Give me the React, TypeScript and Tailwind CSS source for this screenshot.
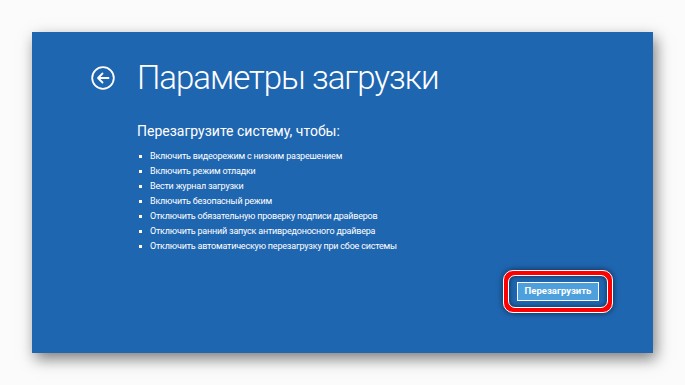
import React from "react";

const items = [
  "Включить видеорежим с низким разрешением",
  "Включить режим отладки",
  "Вести журнал загрузки",
  "Включить безопасный режим",
  "Отключить обязательную проверку подписи драйверов",
  "Отключить ранний запуск антивредоносного драйвера",
  "Отключить автоматическую перезагрузку при сбое системы",
];

export default function App() {
  return (
    <div className="w-[685px] h-[385px] bg-[#fbfbfb] pt-[32px] pl-[32px] overflow-hidden" style={{ fontFamily: 'Roboto, "Noto Sans", sans-serif' }}>
      <div className="w-[621px] h-[321px] bg-[#1f66b1] shadow-[3px_6px_14px_rgba(0,0,0,0.5)] flex flex-col text-white">
        <div className="flex items-center mt-[24px] ml-[59px]">
          <svg width="24" height="24" viewBox="0 0 24 24" className="shrink-0">
            <circle cx="12" cy="12" r="10.8" fill="none" stroke="white" strokeWidth="1.8" />
            <path d="M17.5 12H7M11.5 7.5L7 12L11.5 16.5" fill="none" stroke="white" strokeWidth="1.8" strokeLinecap="round" strokeLinejoin="round" />
          </svg>
          <div className="ml-[22px] text-[33px] font-light leading-[44px] tracking-[-1px]">Параметры загрузки</div>
        </div>
        <div className="ml-[105px] mt-[21px] text-[14px] leading-[20px] font-normal">Перезагрузите систему, чтобы:</div>
        <ul className="ml-[107px] mt-[8px] flex flex-col">
          {items.map((t) => (
            <li key={t} className="flex items-center h-[15px] text-[9px] leading-[15px] tracking-[-0.2px]">
              <span className="w-[3px] h-[3px] bg-white mr-[8px] shrink-0" />
              <span>{t}</span>
            </li>
          ))}
        </ul>
        <div className="flex justify-end mt-[16px] mr-[40px]">
          <div className="rounded-[10px] border border-white bg-[#ff0000] p-[4px] shadow-[0_0_6px_rgba(0,0,0,0.6)]">
            <div className="rounded-[7px] border border-white bg-[#1f66b1] px-[8px] py-[6px] shadow-[inset_0_0_5px_rgba(0,0,0,0.6)]">
              <div className="w-[82px] h-[19px] bg-[#4da0dc] border border-white flex items-center justify-center text-[9.5px] font-bold">
                Перезагрузить
              </div>
            </div>
          </div>
        </div>
      </div>
    </div>
  );
}
